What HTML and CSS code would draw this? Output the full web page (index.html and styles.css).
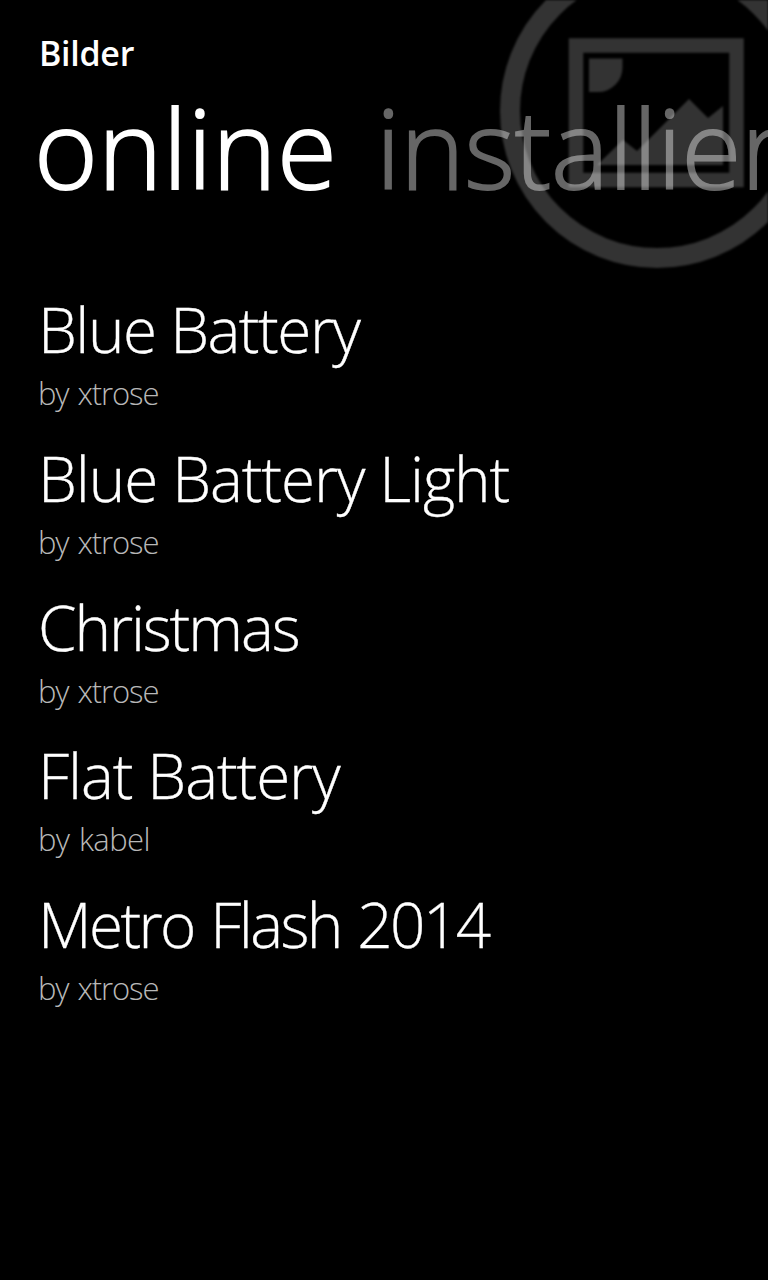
FILE: index.html
```
<!DOCTYPE html>
<html lang="de">
<head>
    <meta charset="UTF-8">
    <meta name="viewport" content="width=device-width, initial-scale=1.0">
    <title>Bilder</title>
    <link rel="stylesheet" href="styles.css">
</head>
<body>
    <svg class="background-icon" viewBox="0 0 280 280">
        <circle cx="169" cy="111" r="147" fill="none" stroke="#333" stroke-width="20"/>
        <rect x="88" y="45.5" width="160.5" height="134.5" fill="none" stroke="#333" stroke-width="14.5"/>
        <path d="M101 58.5h33.5v9a24.500 24.500 0 0 1-24.500 24.500h-9z" fill="#333"/>
        <path d="M109 165l26-25 14 11 52-52 19 19 15-12v59z" fill="#333"/>
    </svg>

    <header>
        <h1 class="app-title">Bilder</h1>
        <nav class="pivot">
            <span class="pivot-item active">online</span>
            <span class="pivot-item">installiert</span>
        </nav>
    </header>

    <ul class="package-list">
        <li>
            <div class="package-name">Blue Battery</div>
            <div class="package-author">by xtrose</div>
        </li>
        <li>
            <div class="package-name name-long">Blue Battery Light</div>
            <div class="package-author">by xtrose</div>
        </li>
        <li>
            <div class="package-name name-tight">Christmas</div>
            <div class="package-author">by xtrose</div>
        </li>
        <li>
            <div class="package-name name-long">Flat Battery</div>
            <div class="package-author author-wide">by kabel</div>
        </li>
        <li>
            <div class="package-name name-digits">Metro Flash 2014</div>
            <div class="package-author">by xtrose</div>
        </li>
    </ul>
</body>
</html>
```
FILE: styles.css
```
* {
    box-sizing: border-box;
}
body {
    margin: 0;
    height: 1280px;
    position: relative;
    overflow: hidden;
    background-color: #000;
    color: #fff;
    font-family: "Open Sans", "Noto Sans", sans-serif;
}
header, .package-list {
    position: relative;
}
.background-icon {
    position: absolute;
    top: 0;
    right: 0;
    width: 280px;
    height: 280px;
    filter: blur(1px);
}
.app-title {
    margin: 0;
    padding: 29px 0 0 39px;
    font-size: 34px;
    line-height: 48px;
    font-weight: 600;
    letter-spacing: -0.3px;
}
.pivot {
    display: flex;
    gap: 39px;
    padding-left: 34px;
    height: 150px;
    line-height: 140px;
    font-size: 109px;
    font-weight: 300;
    white-space: nowrap;
}
.pivot-item {
    opacity: 0.4;
    letter-spacing: -0.3px;
    -webkit-text-stroke: 1.8px #fff;
}
.pivot-item.active {
    opacity: 1;
    letter-spacing: 0.2px;
}
.package-list {
    list-style: none;
    margin: 0;
    padding: 60px 0 0 38px;
}
.package-list li {
    height: 148.8px;
}
.package-name {
    font-size: 62px;
    line-height: 84px;
    font-weight: 300;
    letter-spacing: -1.5px;
    white-space: nowrap;
    -webkit-text-stroke: 0.3px #fff;
}
.name-long {
    letter-spacing: -1.1px;
}
.name-tight {
    letter-spacing: -2.1px;
}
.name-digits {
    letter-spacing: -2.6px;
    word-spacing: 3px;
}
.package-author {
    padding-top: 1px;
    font-size: 31px;
    line-height: 42px;
    font-weight: 300;
    letter-spacing: -1.1px;
    word-spacing: 2px;
    color: #b8b8b8;
}
.author-wide {
    letter-spacing: -0.6px;
}
```
